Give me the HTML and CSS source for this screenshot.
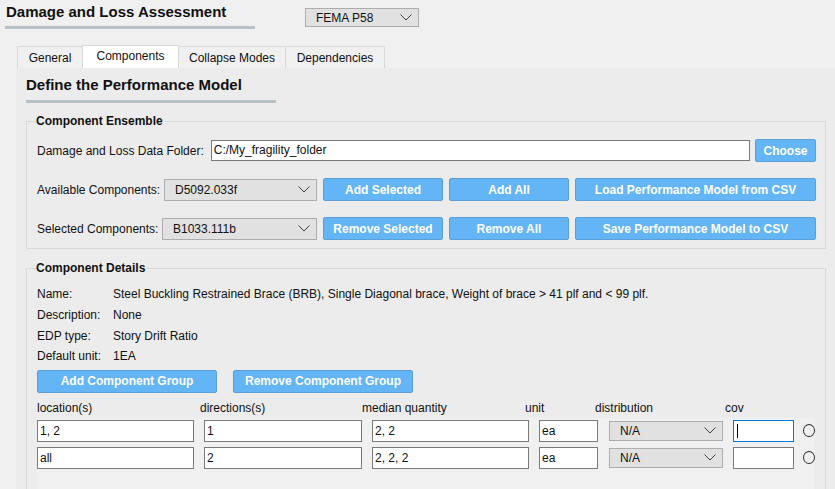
FILE: index.html
```html
<!DOCTYPE html>
<html>
<head>
<meta charset="utf-8">
<link rel="stylesheet" href="styles.css">
</head>
<body>
<div class="app">
  <div class="header">
    <div class="title-wrap">
      <div class="big-title">Damage and Loss Assessment</div>
      <div class="bar bar-top"></div>
    </div>
    <div class="combo combo-fema"><span>FEMA P58</span><svg class="chev" width="12" height="7" viewBox="0 0 12 7"><path d="M0.5 0.5 L6 6 L11.5 0.5" fill="none" stroke="#404040" stroke-width="1"/></svg></div>
  </div>
  <div class="tabs">
    <div class="tab t-general">General</div>
    <div class="tab active t-comp">Components</div>
    <div class="tab t-collapse">Collapse Modes</div>
    <div class="tab t-dep">Dependencies</div>
  </div>
  <div class="pane">
    <div class="pane-title">Define the Performance Model</div>
    <div class="bar bar-pane"></div>

    <fieldset class="group g-ensemble">
      <legend>Component Ensemble</legend>
      <div class="row r-folder">
        <span class="lbl">Damage and Loss Data Folder:</span>
        <div class="input in-folder">C:/My_fragility_folder</div>
        <div class="btn b-choose">Choose</div>
      </div>
      <div class="row r-comp">
        <span class="lbl grow">Available Components:</span>
        <div class="combo combo-avail"><span>D5092.033f</span><svg class="chev" width="12" height="7" viewBox="0 0 12 7"><path d="M0.5 0.5 L6 6 L11.5 0.5" fill="none" stroke="#404040" stroke-width="1"/></svg></div>
        <div class="btn b-mid">Add Selected</div>
        <div class="btn b-mid">Add All</div>
        <div class="btn b-wide">Load Performance Model from CSV</div>
      </div>
      <div class="row r-comp">
        <span class="lbl grow">Selected Components:</span>
        <div class="combo combo-sel"><span>B1033.111b</span><svg class="chev" width="12" height="7" viewBox="0 0 12 7"><path d="M0.5 0.5 L6 6 L11.5 0.5" fill="none" stroke="#404040" stroke-width="1"/></svg></div>
        <div class="btn b-mid">Remove Selected</div>
        <div class="btn b-mid">Remove All</div>
        <div class="btn b-wide">Save Performance Model to CSV</div>
      </div>
    </fieldset>

    <fieldset class="group g-details">
      <legend>Component Details</legend>
      <div class="info">
        <div class="info-row"><span class="key">Name:</span><span>Steel Buckling Restrained Brace (BRB), Single Diagonal brace, Weight of brace &gt; 41 plf and &lt; 99 plf.</span></div>
        <div class="info-row"><span class="key">Description:</span><span>None</span></div>
        <div class="info-row"><span class="key">EDP type:</span><span>Story Drift Ratio</span></div>
        <div class="info-row"><span class="key">Default unit:</span><span>1EA</span></div>
      </div>
      <div class="grp-btns">
        <div class="btn b-grp">Add Component Group</div>
        <div class="btn b-grp">Remove Component Group</div>
      </div>
      <div class="col-heads">
        <span class="h-loc">location(s)</span>
        <span class="h-dir">directions(s)</span>
        <span class="h-med">median quantity</span>
        <span class="h-unit">unit</span>
        <span class="h-dist">distribution</span>
        <span class="h-cov">cov</span>
      </div>
      <div class="scroll">
        <div class="grow-row">
          <div class="input c-loc">1, 2</div>
          <div class="input c-dir">1</div>
          <div class="input c-med">2, 2</div>
          <div class="input c-unit">ea</div>
          <div class="combo c-dist"><span>N/A</span><svg class="chev" width="12" height="7" viewBox="0 0 12 7"><path d="M0.5 0.5 L6 6 L11.5 0.5" fill="none" stroke="#404040" stroke-width="1"/></svg></div>
          <div class="input c-cov focused"><span class="caret"></span></div>
          <div class="radio"></div>
        </div>
        <div class="grow-row">
          <div class="input c-loc">all</div>
          <div class="input c-dir">2</div>
          <div class="input c-med">2, 2, 2</div>
          <div class="input c-unit">ea</div>
          <div class="combo c-dist"><span>N/A</span><svg class="chev" width="12" height="7" viewBox="0 0 12 7"><path d="M0.5 0.5 L6 6 L11.5 0.5" fill="none" stroke="#404040" stroke-width="1"/></svg></div>
          <div class="input c-cov"></div>
          <div class="radio"></div>
        </div>
      </div>
    </fieldset>
  </div>
</div>
</body>
</html>
```

FILE: styles.css
```css
* { box-sizing: border-box; }
html, body {
  margin: 0;
  padding: 0;
}
body {
  width: 835px;
  height: 489px;
  overflow: hidden;
  background: #f0f0f0;
  font-family: "Liberation Sans", Arial, sans-serif;
  font-size: 12px;
  color: #111;
}
.app {
  width: 835px;
  height: 489px;
  display: flex;
  flex-direction: column;
  overflow: hidden;
}
.header {
  display: flex;
  flex: none;
  height: 45px;
  padding-left: 5px;
}
.title-wrap {
  width: 250px;
  padding-top: 3px;
}
.big-title {
  font-size: 15px;
  font-weight: bold;
  line-height: 18px;
  padding-left: 1px;
  color: #111;
}
.bar {
  height: 3px;
  background: #b7c1c8;
}
.bar-top { margin-top: 5px; width: 250px; }

.combo {
  display: flex;
  flex: none;
  align-items: center;
  justify-content: space-between;
  background: #e1e1e1;
  border: 1px solid #adadad;
  padding: 0 6px 0 10px;
  color: #111;
}
.chev { display: block; flex: none; }
.combo-fema {
  margin-left: 50px;
  margin-top: 8px;
  width: 114px;
  height: 19px;
}

.tabs {
  display: flex;
  flex: none;
  align-items: flex-end;
  height: 23px;
  padding-left: 17px;
}
.tab {
  height: 22px;
  border: 1px solid #d9d9d9;
  border-bottom: none;
  margin-right: -1px;
  background: #f0f0f0;
  display: flex;
  align-items: center;
  justify-content: center;
  padding-top: 1px;
  color: #111;
}
.tab.active {
  height: 23px;
  background: #ffffff;
  padding-top: 0;
  padding-bottom: 2px;
  position: relative;
  z-index: 1;
}
.t-general { width: 66px; }
.t-comp { width: 97px; }
.t-collapse { width: 108px; }
.t-dep { width: 100px; }

.pane {
  flex: none;
  height: 421px;
  margin-left: 16px;
  background: #ececec;
  padding: 8px 0 0 10px;
  overflow: hidden;
}
.pane-title {
  font-size: 15px;
  font-weight: bold;
  line-height: 18px;
  color: #111;
}
.bar-pane { margin-top: 6px; width: 250px; }

.group {
  margin: 11px 0 0 0;
  width: 800px;
  border: 1px solid #d9d9d9;
  padding: 0 9px 8px 10px;
  min-width: 0;
}
.group legend {
  font-weight: bold;
  font-size: 12px;
  line-height: 15px;
  padding: 0 2px 0 0;
  margin-left: -1px;
  color: #111;
}
.g-details { margin-top: 12px; padding-bottom: 0; border-bottom: none; height: 240px; }

.row {
  display: flex;
  align-items: center;
  gap: 6px;
  height: 23px;
}
.r-folder { margin-top: 10px; gap: 5px; }
.r-folder .lbl { margin-right: 2px; }
.r-comp { margin-top: 16px; }
.lbl { white-space: nowrap; color: #111; }
.grow { flex: 1; min-width: 0; }

.input {
  background: #fff;
  border: 1px solid #7a7a7a;
  height: 21px;
  line-height: 19px;
  padding-left: 2px;
  color: #111;
  white-space: nowrap;
  flex: none;
}
.in-folder { flex: 1; }
.btn {
  background: #64b5f6;
  border: 1px solid #5c9fd6;
  border-radius: 2px;
  color: #fff;
  font-weight: bold;
  height: 23px;
  display: flex;
  align-items: center;
  justify-content: center;
  white-space: nowrap;
  flex: none;
}
.b-choose { width: 61px; }
.b-mid { width: 120px; }
.b-wide { width: 241px; }
.combo-avail { width: 153px; height: 22px; }
.combo-sel { width: 155px; height: 22px; }

.info { margin-top: 8px; }
.info-row {
  display: flex;
  height: 20.7px;
  align-items: center;
  color: #111;
}
.key { width: 76px; flex: none; }

.grp-btns {
  display: flex;
  gap: 16px;
  margin-top: 3px;
}
.b-grp { width: 180px; }

.col-heads {
  display: flex;
  height: 15px;
  margin-top: 8px;
  color: #111;
}
.h-loc { width: 163px; }
.h-dir { width: 162px; }
.h-med { width: 163px; }
.h-unit { width: 70px; }
.h-dist { width: 130px; }

.scroll {
  margin-top: 2px;
  width: 778px;
  background: #f0f0f0;
  padding-top: 2px;
  height: 80px;
}
.grow-row {
  display: flex;
  align-items: center;
  height: 22px;
  margin-bottom: 5px;
}
.grow-row .input { height: 22px; line-height: 20px; }
.c-loc { width: 157px; margin-right: 10px; }
.c-dir { width: 158px; margin-right: 10px; }
.c-med { width: 157px; margin-right: 10px; }
.c-unit { width: 59px; margin-right: 11px; }
.c-dist { width: 114px; height: 20px; margin-right: 10px; }
.c-cov { width: 61px; position: relative; }
.focused { border-color: #0078d7; }
.caret {
  position: absolute;
  left: 3px;
  top: 3px;
  width: 1px;
  height: 14px;
  background: #000;
}
.radio {
  width: 13px;
  height: 13px;
  border: 1px solid #333;
  border-radius: 50%;
  margin-left: 9px;
  background: transparent;
}
```
